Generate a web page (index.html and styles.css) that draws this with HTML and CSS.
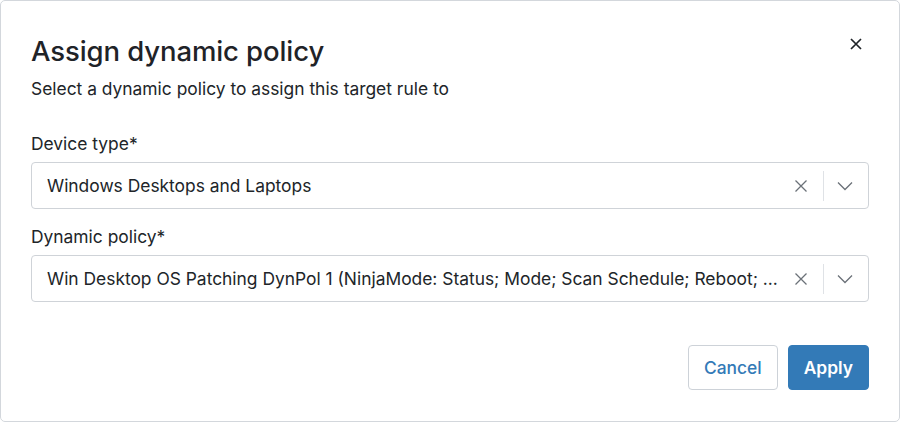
FILE: index.html
```html
<!DOCTYPE html>
<html>
<head>
<meta charset="utf-8">
<link rel="stylesheet" href="styles.css">
</head>
<body>
<div class="modal">
  <div class="modal-header">
    <div class="titles">
      <h1 class="title">Assign dynamic policy</h1>
      <p class="subtitle">Select a dynamic policy to assign this target rule to</p>
    </div>
    <button class="close" aria-label="Close">
      <svg width="12" height="12" viewBox="0 0 12 12"><path d="M1 1L11 11M11 1L1 11" stroke="#1f2328" stroke-width="1.7" fill="none"/></svg>
    </button>
  </div>
  <div class="modal-body">
    <div class="field">
      <label class="label">Device type*</label>
      <div class="select">
        <span class="value">Windows Desktops and Laptops</span>
        <span class="clear"><svg width="14" height="14" viewBox="0 0 14 14"><path d="M1.5 1.5L12.5 12.5M12.5 1.5L1.5 12.5" stroke="#6b7178" stroke-width="1.3" fill="none"/></svg></span>
        <span class="sep"></span>
        <span class="chev"><svg width="16" height="10" viewBox="0 0 16 10"><path d="M1 1.5L8 8.5L15 1.5" stroke="#6b7178" stroke-width="1.3" fill="none"/></svg></span>
      </div>
    </div>
    <div class="field">
      <label class="label">Dynamic policy*</label>
      <div class="select">
        <span class="value">Win Desktop OS Patching DynPol 1 (NinjaMode: Status; Mode; Scan Schedule; Reboot; ...</span>
        <span class="clear"><svg width="14" height="14" viewBox="0 0 14 14"><path d="M1.5 1.5L12.5 12.5M12.5 1.5L1.5 12.5" stroke="#6b7178" stroke-width="1.3" fill="none"/></svg></span>
        <span class="sep"></span>
        <span class="chev"><svg width="16" height="10" viewBox="0 0 16 10"><path d="M1 1.5L8 8.5L15 1.5" stroke="#6b7178" stroke-width="1.3" fill="none"/></svg></span>
      </div>
    </div>
  </div>
  <div class="modal-footer">
    <button class="btn btn-secondary">Cancel</button>
    <button class="btn btn-primary">Apply</button>
  </div>
</div>
</body>
</html>
```
FILE: styles.css
```css
* { box-sizing: border-box; }
html, body { margin: 0; padding: 0; background: #fff; }
body {
  font-family: Inter, "Noto Sans", sans-serif;
  color: #212529;
  width: 900px;
  height: 422px;
}
.modal {
  width: 900px;
  height: 422px;
  border: 1px solid #d3d7dc;
  border-radius: 5px;
  background: #fff;
  display: flex;
  flex-direction: column;
}
.modal-header {
  display: flex;
  justify-content: space-between;
  align-items: flex-start;
  padding: 32px 30px 0 30px;
}
.title {
  margin: 0;
  font-size: 27.5px;
  font-weight: 500;
  line-height: 36px;
  color: #1f2328;
  letter-spacing: -0.1px;
}
.subtitle {
  margin: 8px 0 0 0;
  font-size: 17.4px;
  line-height: 24px;
  color: #212529;
}
.close {
  background: none;
  border: none;
  padding: 0;
  margin: 5px 7px 0 0;
  width: 12px;
  height: 12px;
  display: flex;
}
.modal-body {
  padding: 31px 30px 0 30px;
  display: flex;
  flex-direction: column;
  gap: 16px;
}
.field { display: flex; flex-direction: column; }
.label {
  font-size: 17.4px;
  line-height: 24px;
  margin-bottom: 6px;
  color: #212529;
}
.select {
  height: 47px;
  border: 1px solid #cfd3d8;
  border-radius: 4px;
  display: flex;
  align-items: center;
  padding-left: 15px;
}
.value {
  flex: 1;
  min-width: 0;
  white-space: nowrap;
  overflow: hidden;
  font-size: 17.4px;
  color: #212529;
  padding-right: 8px;
}
.clear { display: flex; width: 14px; margin-right: 15px; }
.sep { width: 1px; height: 30px; background: #dfe2e6; }
.chev { display: flex; width: 44px; justify-content: center; padding: 1px 3px 0 0; }
.modal-footer {
  margin-top: auto;
  display: flex;
  justify-content: flex-end;
  gap: 10px;
  padding: 0 30px 31px 30px;
}
.btn {
  font-family: Inter, "Noto Sans", sans-serif;
  font-size: 17.4px;
  height: 45px;
  border-radius: 4px;
  padding: 0 15px;
  cursor: pointer;
}
.btn-secondary {
  background: #fff;
  border: 1px solid #cdd2d8;
  color: #337ab7;
  font-weight: 500;
}
.btn-primary {
  background: #337ab7;
  border: 1px solid #337ab7;
  color: #fff;
  font-weight: 600;
}
```
